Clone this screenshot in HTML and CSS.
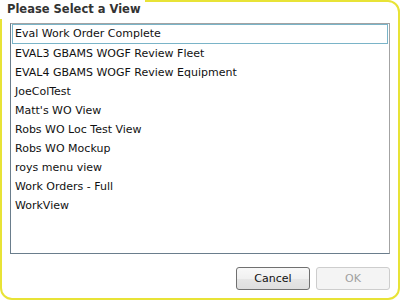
FILE: index.html
```html
<!DOCTYPE html>
<html>
<head>
<meta charset="utf-8">
<link rel="stylesheet" href="styles.css">
</head>
<body>
<div class="frame">
  <div class="title">Please Select a View</div>
  <ul class="list">
    <li class="item selected">Eval Work Order Complete</li>
    <li class="item">EVAL3 GBAMS WOGF Review Fleet</li>
    <li class="item">EVAL4 GBAMS WOGF Review Equipment</li>
    <li class="item">JoeColTest</li>
    <li class="item">Matt's WO View</li>
    <li class="item">Robs WO Loc Test View</li>
    <li class="item">Robs WO Mockup</li>
    <li class="item">roys menu view</li>
    <li class="item">Work Orders - Full</li>
    <li class="item">WorkView</li>
  </ul>
  <div class="actions">
    <button class="btn">Cancel</button>
    <button class="btn disabled" disabled>OK</button>
  </div>
</div>
</body>
</html>
```
FILE: styles.css
```css
html, body {
  margin: 0;
  padding: 0;
  background: #ffffff;
}
.frame {
  position: relative;
  box-sizing: border-box;
  width: 400px;
  height: 300px;
  border: 2px solid #e8e336;
  border-radius: 12px;
  padding: 21px 8px 0 8px;
  display: flex;
  flex-direction: column;
  font-family: "DejaVu Sans", Tahoma, sans-serif;
  font-size: 11px;
  color: #111111;
}
.title {
  position: absolute;
  top: -2px;
  left: -2px;
  background: #ffffff;
  padding: 2px 4px 3px 7px;
  font-weight: bold;
  font-size: 11.5px;
  color: #333333;
  line-height: 14px;
}
.list {
  list-style: none;
  margin: 0;
  padding: 0 1px;
  box-sizing: border-box;
  height: 231px;
  border: 1px solid #a3a3a3;
  border-left-color: #6a7d8c;
  border-bottom-color: #6a7d8c;
}
.item {
  box-sizing: border-box;
  height: 19px;
  line-height: 17px;
  padding: 0 2px;
  border: 1px solid transparent;
  white-space: nowrap;
}
.item.selected {
  border-color: #7ab4c8;
  height: 20px;
  line-height: 18px;
}
.actions {
  display: flex;
  justify-content: flex-end;
  gap: 6px;
  margin-top: 13px;
}
.btn {
  width: 74px;
  height: 23px;
  box-sizing: border-box;
  border: 1px solid #707070;
  border-radius: 3px;
  background: linear-gradient(#f8f8f8 0%, #f0f0f0 50%, #e6e6e6 51%, #dedede 100%);
  font-family: "DejaVu Sans", Tahoma, sans-serif;
  font-size: 11px;
  color: #111111;
  padding: 0;
}
.btn.disabled {
  border-color: #cdcdcd;
  background: #f4f4f4;
  color: #a0a0a0;
}
```
